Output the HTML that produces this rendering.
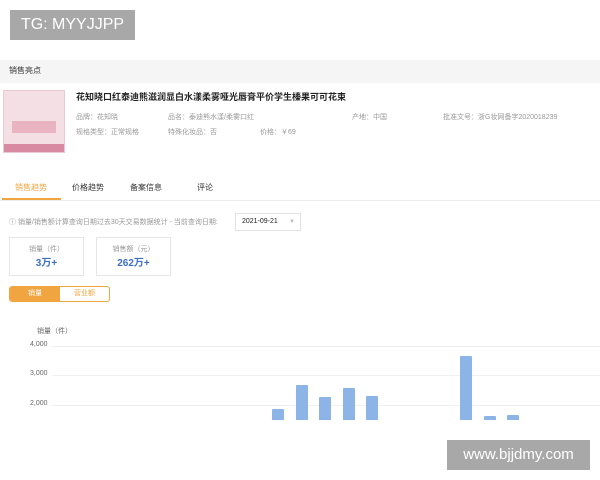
<!DOCTYPE html>
<html><head><meta charset="utf-8"><style>
body{margin:0;width:600px;height:480px;background:#fff;position:relative;overflow:hidden;font-family:"Liberation Sans","Noto Sans CJK SC",sans-serif;}
.a{position:absolute;white-space:nowrap}
.s{font-size:7px;color:#999}
.bar{position:absolute;background:#8cb4e6;width:12px;border-radius:1px 1px 0 0}
.grid{position:absolute;left:52px;right:0;height:1px;background:#eef0f3}
.y{position:absolute;font-size:7px;color:#666;left:30px}
</style></head><body>
<div class="a" style="left:10px;top:10px;width:125px;height:30px;background:#a8a8a8;color:#fff;font-size:16px;line-height:30px;text-align:center">TG: MYYJJPP</div>
<div class="a" style="left:0;top:60px;width:600px;height:23px;background:#f5f5f5"></div>
<div class="a" style="left:9px;top:65px;font-size:8px;color:#333">销售亮点</div>
<div class="a" style="left:3px;top:90px;width:60px;height:61px;background:#f3dfe4;border:1px solid #eac9d2"><div style="position:absolute;left:0;bottom:0;width:60px;height:8px;background:#d98aa3"></div><div style="position:absolute;left:8px;top:30px;width:44px;height:12px;background:#e9b3c2"></div></div>
<div class="a" style="left:76px;top:90px;font-size:9px;font-weight:bold;color:#222">花知晓口红泰迪熊滋润显白水漾柔雾哑光唇膏平价学生榛果可可花束</div>
<div class="a s" style="left:76px;top:112px">品牌：花知晓</div>
<div class="a s" style="left:168px;top:112px">品名：泰迪熊水漾/柔雾口红</div>
<div class="a s" style="left:352px;top:112px">产地：中国</div>
<div class="a s" style="left:443px;top:112px">批准文号：浙G妆网备字2020018239</div>
<div class="a s" style="left:76px;top:127px">规格类型：正常规格</div>
<div class="a s" style="left:168px;top:127px">特殊化妆品：否</div>
<div class="a s" style="left:260px;top:127px">价格：￥69</div>
<div class="a" style="left:0;top:200px;width:600px;height:1px;background:#eee"></div>
<div class="a" style="left:2px;top:198px;width:59px;height:2px;background:#f0a540"></div>
<div class="a" style="left:15px;top:182px;font-size:8px;color:#f0a540">销售趋势</div>
<div class="a" style="left:72px;top:182px;font-size:8px;color:#333">价格趋势</div>
<div class="a" style="left:130px;top:182px;font-size:8px;color:#333">备案信息</div>
<div class="a" style="left:197px;top:182px;font-size:8px;color:#333">评论</div>
<div class="a s" style="left:9px;top:217px">ⓘ 销量/销售额计算查询日期过去30天交易数据统计 - 当前查询日期:</div>
<div class="a" style="left:235px;top:213px;width:64px;height:16px;border:1px solid #e3e3e3;font-size:7px;line-height:16px;color:#222"><span style="margin-left:6px">2021-09-21</span><span style="position:absolute;right:5px;color:#bbb;font-size:6px">▼</span></div>
<div class="a" style="left:9px;top:237px;width:73px;height:37px;border:1px solid #e6e6e6;text-align:center"><div style="font-size:7px;color:#999;margin-top:6px">销量（件）</div><div style="font-size:10px;font-weight:bold;color:#3c6fc4">3万+</div></div>
<div class="a" style="left:96px;top:237px;width:73px;height:37px;border:1px solid #e6e6e6;text-align:center"><div style="font-size:7px;color:#999;margin-top:6px">销售额（元）</div><div style="font-size:10px;font-weight:bold;color:#3c6fc4">262万+</div></div>
<div class="a" style="left:9px;top:286px;width:99px;height:14px;border:1px solid #f0a540;border-radius:3px;overflow:hidden;font-size:7px;line-height:14px"><div style="position:absolute;left:0;top:0;width:50px;height:14px;background:#f0a540;color:#fff;text-align:center">销量</div><div style="position:absolute;left:50px;top:0;width:49px;text-align:center;color:#f0a540">营业额</div></div>
<div class="a" style="left:37px;top:326px;font-size:7px;color:#666">销量（件）</div>
<div class="y" style="top:341px">4,000</div><div class="grid" style="top:346px"></div>
<div class="y" style="top:370px">3,000</div><div class="grid" style="top:375px"></div>
<div class="y" style="top:400px">2,000</div><div class="grid" style="top:405px"></div>
<div class="bar" style="left:272px;top:409px;height:11px"></div>
<div class="bar" style="left:296px;top:385px;height:35px"></div>
<div class="bar" style="left:319px;top:397px;height:23px"></div>
<div class="bar" style="left:343px;top:388px;height:32px"></div>
<div class="bar" style="left:366px;top:396px;height:24px"></div>
<div class="bar" style="left:460px;top:356px;height:64px"></div>
<div class="bar" style="left:484px;top:416px;height:4px"></div>
<div class="bar" style="left:507px;top:415px;height:5px"></div>
<div class="a" style="left:447px;top:440px;width:143px;height:30px;background:#a8a8a8;color:#fff;font-size:15px;line-height:30px;text-align:center">www.bjjdmy.com</div>
</body></html>
